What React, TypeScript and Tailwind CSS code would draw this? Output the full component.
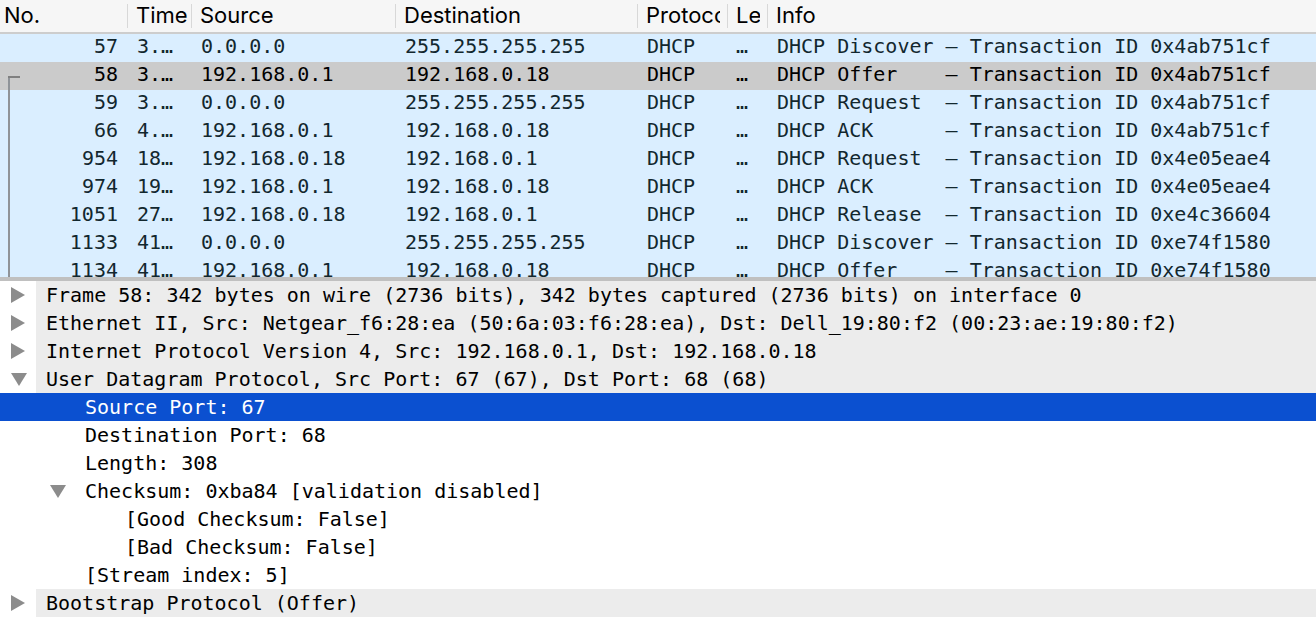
import React from "react";

const mono = "font-['DejaVu_Sans_Mono',monospace]";

const columns = [
  { label: "No.", width: "w-[127px]", pad: "pl-[4px] pr-[7px]" },
  { label: "Time", width: "w-[63px]", pad: "pl-[8px] pr-[3px]" },
  { label: "Source", width: "w-[203px]", pad: "pl-[8px] pr-[7px]" },
  { label: "Destination", width: "w-[241px]", pad: "pl-[8px] pr-[7px]" },
  { label: "Protocol", width: "w-[89px]", pad: "pl-[8px] pr-[7px]" },
  { label: "Length", width: "w-[39px]", pad: "pl-[8px] pr-[7px]" },
  { label: "Info", width: "flex-1", pad: "pl-[8px] pr-[7px]" },
];

const packets = [
  { no: "57", time: "3.…", src: "0.0.0.0", dst: "255.255.255.255", info: "DHCP Discover – Transaction ID 0x4ab751cf" },
  { no: "58", time: "3.…", src: "192.168.0.1", dst: "192.168.0.18", info: "DHCP Offer    – Transaction ID 0x4ab751cf", selected: true },
  { no: "59", time: "3.…", src: "0.0.0.0", dst: "255.255.255.255", info: "DHCP Request  – Transaction ID 0x4ab751cf" },
  { no: "66", time: "4.…", src: "192.168.0.1", dst: "192.168.0.18", info: "DHCP ACK      – Transaction ID 0x4ab751cf" },
  { no: "954", time: "18…", src: "192.168.0.18", dst: "192.168.0.1", info: "DHCP Request  – Transaction ID 0x4e05eae4" },
  { no: "974", time: "19…", src: "192.168.0.1", dst: "192.168.0.18", info: "DHCP ACK      – Transaction ID 0x4e05eae4" },
  { no: "1051", time: "27…", src: "192.168.0.18", dst: "192.168.0.1", info: "DHCP Release  – Transaction ID 0xe4c36604" },
  { no: "1133", time: "41…", src: "0.0.0.0", dst: "255.255.255.255", info: "DHCP Discover – Transaction ID 0xe74f1580" },
  { no: "1134", time: "41…", src: "192.168.0.1", dst: "192.168.0.18", info: "DHCP Offer    – Transaction ID 0xe74f1580" },
];

type Node = {
  text: string;
  level: number;
  expander?: "open" | "closed";
  selected?: boolean;
};

const details: Node[] = [
  { text: "Frame 58: 342 bytes on wire (2736 bits), 342 bytes captured (2736 bits) on interface 0", level: 0, expander: "closed" },
  { text: "Ethernet II, Src: Netgear_f6:28:ea (50:6a:03:f6:28:ea), Dst: Dell_19:80:f2 (00:23:ae:19:80:f2)", level: 0, expander: "closed" },
  { text: "Internet Protocol Version 4, Src: 192.168.0.1, Dst: 192.168.0.18", level: 0, expander: "closed" },
  { text: "User Datagram Protocol, Src Port: 67 (67), Dst Port: 68 (68)", level: 0, expander: "open" },
  { text: "Source Port: 67", level: 1, selected: true },
  { text: "Destination Port: 68", level: 1 },
  { text: "Length: 308", level: 1 },
  { text: "Checksum: 0xba84 [validation disabled]", level: 1, expander: "open" },
  { text: "[Good Checksum: False]", level: 2 },
  { text: "[Bad Checksum: False]", level: 2 },
  { text: "[Stream index: 5]", level: 1 },
  { text: "Bootstrap Protocol (Offer)", level: 0, expander: "closed" },
];

const Triangle = ({ open }: { open: boolean }) =>
  open ? (
    <svg width="16" height="13" viewBox="0 0 16 13" className="shrink-0">
      <polygon points="0,0 16,0 8,13" fill="#8c8c8c" />
    </svg>
  ) : (
    <svg width="14" height="16" viewBox="0 0 14 16" className="shrink-0">
      <polygon points="0,0 14,8 0,16" fill="#8c8c8c" />
    </svg>
  );

const indent = ["pl-[45px]", "pl-[85px]", "pl-[125px]"];
const arrowIndent = ["pl-[11px]", "pl-[50px]", "pl-[90px]"];

export default function App() {
  return (
    <div className="w-[1316px] h-[636px] overflow-hidden bg-white flex flex-col">
      {/* Column header */}
      <div className="h-[34px] shrink-0 flex items-center bg-[#f6f6f6] border-b-[2px] border-[#cdcdcd] font-['Inter',sans-serif] text-[22px] text-black">
        {columns.map((col, i) => (
          <React.Fragment key={col.label}>
            {i > 0 && <div className="w-px h-[24px] bg-[#d8d8d8] shrink-0" />}
            <div className={`${col.width} ${col.pad} shrink-0 pb-[2px]`}>
              <div className="overflow-hidden whitespace-nowrap leading-[30px]">{col.label}</div>
            </div>
          </React.Fragment>
        ))}
      </div>

      {/* Packet list */}
      <div className={`relative h-[243px] shrink-0 overflow-hidden ${mono} text-[20px]`}>
        {packets.map((p) => (
          <div
            key={p.no}
            className={`h-[28px] flex items-start leading-[24px] whitespace-pre ${
              p.selected ? "bg-[#cbcbcb] text-black" : "bg-[#daeeff] text-[#12272e]"
            }`}
          >
            <div className="w-[127px] shrink-0 text-right pr-[9px]">{p.no}</div>
            <div className="w-[64px] shrink-0 pl-[10px] overflow-hidden">{p.time}</div>
            <div className="w-[204px] shrink-0 pl-[10px] overflow-hidden">{p.src}</div>
            <div className="w-[242px] shrink-0 pl-[10px] overflow-hidden">{p.dst}</div>
            <div className="w-[90px] shrink-0 pl-[10px] overflow-hidden">DHCP</div>
            <div className="w-[40px] shrink-0 pl-[9px] overflow-hidden">…</div>
            <div className="flex-1 pl-[10px] overflow-hidden">{p.info}</div>
          </div>
        ))}
        {/* related-packet bracket */}
        <div className="absolute left-[8px] top-[42px] bottom-0 w-[2px] bg-[#8f9398]" />
        <div className="absolute left-[8px] top-[42px] w-[12px] h-[2px] bg-[#808080]" />
      </div>

      <div className="h-[4px] shrink-0 bg-[#c0c0c0]" />

      {/* Packet details */}
      <div className={`flex-1 ${mono} text-[20px] text-black`}>
        {details.map((n, i) => {
          if (n.level === 0) {
            return (
              <div key={i} className="h-[28px] flex items-center">
                <div className="w-[36px] h-full shrink-0 flex items-center pl-[11px] bg-white">
                  <Triangle open={n.expander === "open"} />
                </div>
                <div className="flex-1 h-full bg-[#ececec] pl-[10px] leading-[28px] whitespace-pre overflow-hidden">
                  {n.text}
                </div>
              </div>
            );
          }
          return (
            <div
              key={i}
              className={`relative h-[28px] leading-[28px] whitespace-pre ${indent[n.level]} ${
                n.selected ? "bg-[#0b50d0] text-white" : "bg-white"
              }`}
            >
              {n.expander && (
                <div className={`absolute left-0 top-0 h-full flex items-center ${arrowIndent[n.level]}`}>
                  <Triangle open={n.expander === "open"} />
                </div>
              )}
              {n.text}
            </div>
          );
        })}
      </div>
    </div>
  );
}
